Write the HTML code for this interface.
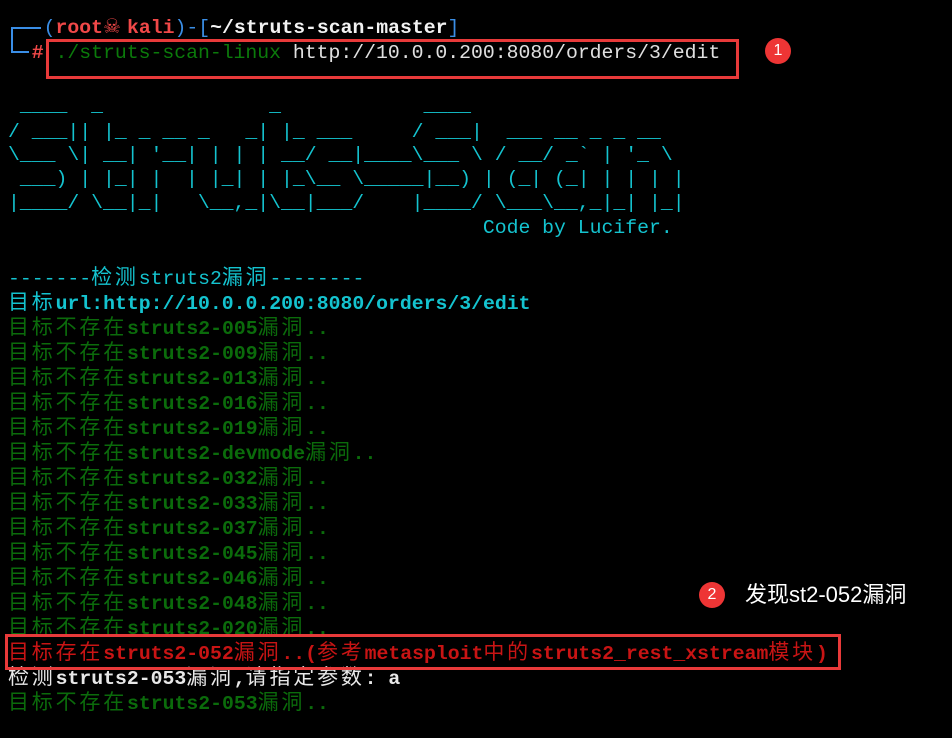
<!DOCTYPE html>
<html><head><meta charset="utf-8"><style>
html,body{margin:0;padding:0;background:#000;width:952px;height:738px;overflow:hidden;}
#t{position:absolute;left:8px;top:16px;margin:0;font-family:"Liberation Mono","Noto Sans CJK SC",monospace;font-size:19.8px;color:#e0e0e0;}
#t div{height:25px;line-height:25px;white-space:pre;overflow:visible}
.c{letter-spacing:2.8px;font-size:21px;font-family:"Noto Sans CJK SC","WenQuanYi Zen Hei",sans-serif;font-weight:normal;line-height:1;}
.cy{color:#14c3cf}
.g{color:#0b6b0b;font-weight:bold}
.r{color:#c81414;font-weight:bold}
.w{color:#e8e8e8;font-weight:bold}
.bl{color:#3a8ee6}
.rd{color:#f04848;font-weight:bold}
.wb{color:#f2f2f2;font-weight:bold}
.gn{color:#0b7a0b}
.art{color:#14c3cf}
.sk{display:inline-block;width:24px;text-align:left;color:#f04848;font-family:"DejaVu Sans",sans-serif;font-size:20px;line-height:1}
.ln{position:absolute;background:#3a8ee6}
.box{position:absolute;border:3px solid #e83a3a;box-sizing:border-box}
.badge{position:absolute;width:26px;height:26px;border-radius:50%;background:#ee3535;color:#fff;font:16px "Liberation Sans",sans-serif;text-align:center;line-height:26px}
.note{position:absolute;left:745px;top:580px;color:#fff;font:22px "Liberation Sans","Noto Sans CJK SC",sans-serif;line-height:30px}
</style></head><body>
<div class="ln" style="left:11px;top:27px;width:2px;height:26px"></div>
<div class="ln" style="left:11px;top:27px;width:30px;height:2px"></div>
<div class="ln" style="left:11px;top:51px;width:18px;height:2px"></div>
<div id="t">
<div>   <span class="bl">(</span><span class="rd">root</span><span class="sk">☠</span><span class="rd">kali</span><span class="bl">)-[</span><span class="wb">~/struts-scan-master</span><span class="bl">]</span></div>
<div>  <span class="rd">#</span> <span class="gn">./struts-scan-linux</span> http://10.0.0.200:8080/orders/3/edit</div>
<div> </div>
<div class="art" style="position:relative;top:3px"> ____  _              _            ____                  </div>
<div class="art" style="position:relative;top:4px">/ ___|| |_ _ __ _   _| |_ ___     / ___|  ___ __ _ _ __  </div>
<div class="art" style="position:relative;top:2px">\___ \| __| '__| | | | __/ __|____\___ \ / __/ _` | '_ \ </div>
<div class="art" style="position:relative;top:1px"> ___) | |_| |  | |_| | |_\__ \_____|__) | (_| (_| | | | |</div>
<div class="art" style="position:relative;top:0px">|____/ \__|_|   \__,_|\__|___/    |____/ \___\__,_|_| |_|</div>
<div class="art">                                        Code by Lucifer.</div>
<div> </div>
<div class="cy">-------<span class="c">检测</span>struts2<span class="c">漏洞</span>--------</div>
<div class="cy" style="font-weight:bold"><span class="c">目标</span>url:http://10.0.0.200:8080/orders/3/edit</div>
<div class="g"><span class="c">目标不存在</span>struts2-005<span class="c">漏洞</span>..</div>
<div class="g"><span class="c">目标不存在</span>struts2-009<span class="c">漏洞</span>..</div>
<div class="g"><span class="c">目标不存在</span>struts2-013<span class="c">漏洞</span>..</div>
<div class="g"><span class="c">目标不存在</span>struts2-016<span class="c">漏洞</span>..</div>
<div class="g"><span class="c">目标不存在</span>struts2-019<span class="c">漏洞</span>..</div>
<div class="g"><span class="c">目标不存在</span>struts2-devmode<span class="c">漏洞</span>..</div>
<div class="g"><span class="c">目标不存在</span>struts2-032<span class="c">漏洞</span>..</div>
<div class="g"><span class="c">目标不存在</span>struts2-033<span class="c">漏洞</span>..</div>
<div class="g"><span class="c">目标不存在</span>struts2-037<span class="c">漏洞</span>..</div>
<div class="g"><span class="c">目标不存在</span>struts2-045<span class="c">漏洞</span>..</div>
<div class="g"><span class="c">目标不存在</span>struts2-046<span class="c">漏洞</span>..</div>
<div class="g"><span class="c">目标不存在</span>struts2-048<span class="c">漏洞</span>..</div>
<div class="g"><span class="c">目标不存在</span>struts2-020<span class="c">漏洞</span>..</div>
<div class="r"><span class="c">目标存在</span>struts2-052<span class="c">漏洞</span>..(<span class="c">参考</span>metasploit<span class="c">中的</span>struts2_rest_xstream<span class="c">模块</span>)</div>
<div class="w"><span class="c">检测</span>struts2-053<span class="c">漏洞</span>,<span class="c">请指定参数</span>: a</div>
<div class="g"><span class="c">目标不存在</span>struts2-053<span class="c">漏洞</span>..</div>
</div>
<div class="box" style="left:46px;top:39px;width:693px;height:40px"></div>
<div class="box" style="left:5px;top:634px;width:836px;height:36px"></div>
<div class="badge" style="left:765px;top:38px">1</div>
<div class="badge" style="left:699px;top:582px">2</div>
<div class="note">发现st2-052漏洞</div>
</body></html>
